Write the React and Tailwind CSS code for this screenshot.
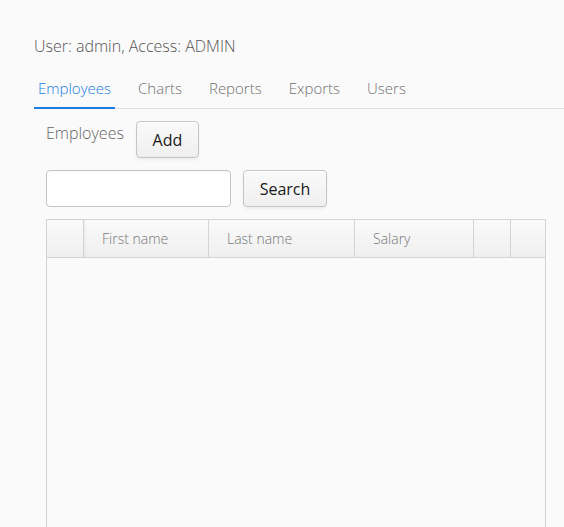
import React from "react";

const tabs = ["Employees", "Charts", "Reports", "Exports", "Users"];

const Button = ({ children, className = "" }) => (
  <button
    className={`h-[37px] rounded-[4px] border border-[#c5c5c5] bg-gradient-to-b from-[#fafafa] to-[#efefef] text-[16px] font-normal text-[#191919] shadow-[0_2px_3px_rgba(0,0,0,0.05),inset_0_1px_0_#fff] ${className}`}
  >
    {children}
  </button>
);

export default function App() {
  return (
    <div
      className="h-[527px] w-[564px] overflow-hidden bg-[#fafafa] font-light text-[#464646]"
      style={{ fontFamily: '"Open Sans", sans-serif' }}
    >
      <div className="pl-[34px] pt-[34px] text-[16px] leading-[24px] text-[#555]">
        User: admin, Access: ADMIN
      </div>

      {/* tabs */}
      <div className="ml-[34px] mt-[19px] flex border-b border-[#dfdfdf] text-[15px] leading-[22px]">
        {tabs.map((t, i) => (
          <div
            key={t}
            className={`-mb-px px-[4px] pb-[8px] ${i > 0 ? "ml-[19px]" : ""} ${
              i === 0
                ? "border-b-2 border-[#197de1] text-[#197de1]"
                : "border-b-2 border-transparent text-[#707070]"
            }`}
          >
            {t}
          </div>
        ))}
      </div>

      <div className="pl-[46px]">
        <div className="mt-[12px] flex items-start gap-[12px]">
          <span className="pt-[1px] text-[16px] leading-[22px] text-[#666]">Employees</span>
          <Button className="w-[63px]">Add</Button>
        </div>

        <div className="mt-[12px] flex gap-[12px]">
          <input className="h-[37px] w-[185px] rounded-[4px] border border-[#c5c5c5] bg-white shadow-[inset_0_1px_0_#f7f7f7]" />
          <Button className="w-[84px]">Search</Button>
        </div>

        {/* table */}
        <div className="mt-[12px] h-[320px] w-[500px] border border-[#d4d4d4] bg-[#fafafa]">
          <div className="flex h-[38px] border-b border-[#d4d4d4] bg-gradient-to-b from-[#fafafa] to-[#efefef] text-[14px] text-[#777]">
            <div className="w-[37px] border-r border-[#d4d4d4] shadow-[1px_0_2px_rgba(0,0,0,0.06)]" />
            <div className="flex w-[125px] items-center border-r border-[#d4d4d4] pl-[18px]">First name</div>
            <div className="flex w-[146px] items-center border-r border-[#d4d4d4] pl-[18px]">Last name</div>
            <div className="flex w-[119px] items-center border-r border-[#d4d4d4] pl-[18px]">Salary</div>
            <div className="w-[37px] border-r border-[#d4d4d4]" />
            <div className="flex-1" />
          </div>
        </div>
      </div>
    </div>
  );
}
